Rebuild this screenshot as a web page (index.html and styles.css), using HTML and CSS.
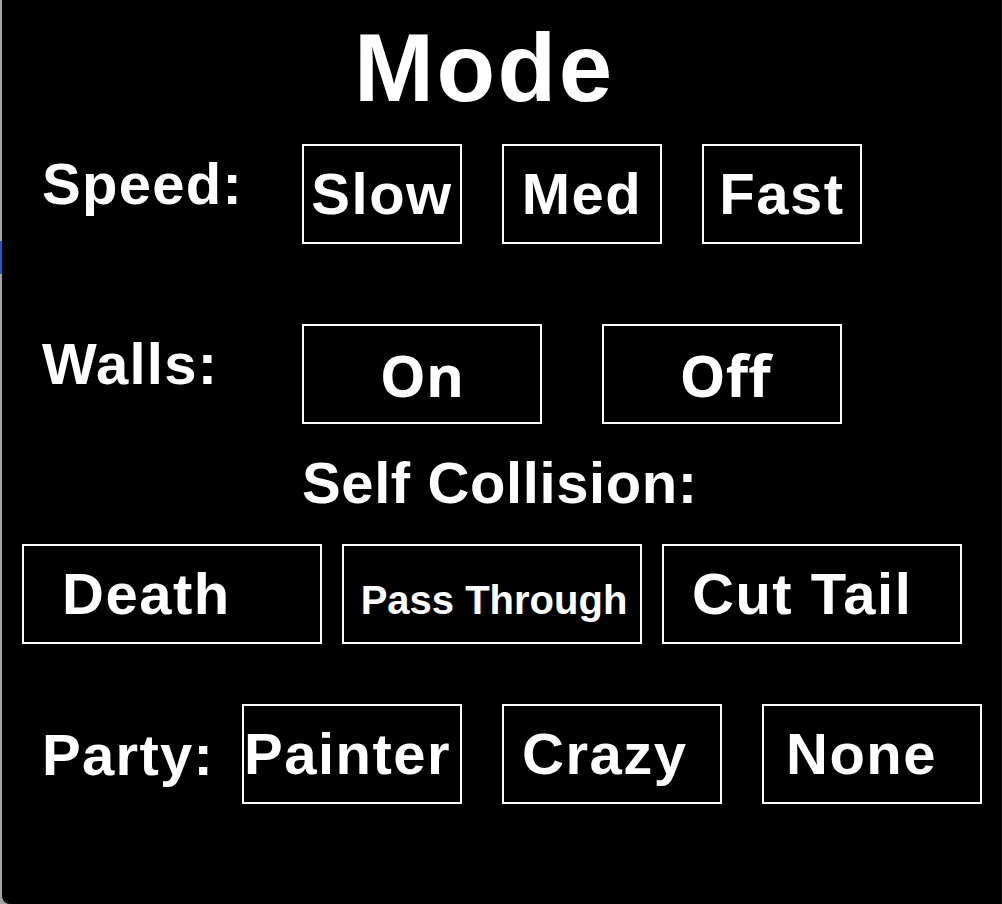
FILE: index.html
```html
<!DOCTYPE html>
<html lang="en">
<head>
<meta charset="utf-8">
<title>Mode</title>
<link rel="stylesheet" href="styles.css">
</head>
<body>
<div class="panel">
  <h1 class="title">Mode</h1>

  <div class="row row-speed">
    <div class="label label-speed">Speed:</div>
    <div class="options gap-40">
      <div class="btn btn-160">Slow</div>
      <div class="btn btn-160">Med</div>
      <div class="btn btn-160">Fast</div>
    </div>
  </div>

  <div class="row row-walls">
    <div class="label label-speed">Walls:</div>
    <div class="options gap-60">
      <div class="btn btn-240 alt-font">On</div>
      <div class="btn btn-240 alt-font">Off</div>
    </div>
  </div>

  <div class="section-label">Self Collision:</div>

  <div class="row row-collision">
    <div class="options gap-20">
      <div class="btn btn-300 start pad-death">Death</div>
      <div class="btn btn-300 small">Pass Through</div>
      <div class="btn btn-300 start pad-cut">Cut Tail</div>
    </div>
  </div>

  <div class="row row-party">
    <div class="label label-party">Party:</div>
    <div class="options gap-40">
      <div class="btn btn-220 start pad-painter">Painter</div>
      <div class="btn btn-220 start pad-crazy">Crazy</div>
      <div class="btn btn-220 start pad-none">None</div>
    </div>
  </div>
</div>
</body>
</html>
```

FILE: styles.css
```css
* {
  box-sizing: border-box;
}

html, body {
  margin: 0;
  padding: 0;
}

body {
  width: 1002px;
  height: 904px;
  overflow: hidden;
  background: linear-gradient(to bottom, #a3a3a3 0 241px, #2456c4 241px 274px, #a3a3a3 274px);
  font-family: "Liberation Sans", Arial, Helvetica, sans-serif;
  font-weight: bold;
  color: #fff;
}

.panel {
  margin-left: 2px;
  width: 1000px;
  height: 904px;
  background: #000;
  border-bottom-left-radius: 8px;
  border-right: 1px solid #151515;
  display: flex;
  flex-direction: column;
}

.title {
  margin: 20px 0 0 0;
  padding-left: 352px;
  font-size: 96px;
  line-height: 96px;
  font-weight: bold;
  letter-spacing: 2.5px;
}

.row {
  display: flex;
  align-items: flex-start;
}

.row-speed {
  margin-top: 28px;
  padding-left: 40px;
}

.row-walls {
  margin-top: 80px;
  padding-left: 40px;
}

.row-collision {
  margin-top: 32px;
  padding-left: 20px;
}

.row-party {
  margin-top: 60px;
  padding-left: 40px;
}

.label {
  font-size: 58px;
  line-height: 58px;
  letter-spacing: 1.3px;
  white-space: nowrap;
}

.label-speed {
  width: 260px;
  margin-top: 11px;
}

.label-party {
  width: 200px;
  margin-top: 22px;
}

.section-label {
  margin-top: 30px;
  padding-left: 300px;
  font-size: 58px;
  line-height: 58px;
  letter-spacing: 0.6px;
}

.options {
  display: flex;
}

.gap-20 { gap: 20px; }
.gap-40 { gap: 40px; }
.gap-60 { gap: 60px; }

.btn {
  height: 100px;
  border: 2px solid #fff;
  display: flex;
  align-items: center;
  justify-content: center;
  font-size: 58px;
  line-height: 96px;
  letter-spacing: 1.5px;
  white-space: nowrap;
}

.btn-160 { width: 160px; }
.btn-220 { width: 220px; }
.btn-240 { width: 240px; }
.btn-300 { width: 300px; }

.alt-font {
  font-family: "Open Sans", "DejaVu Sans", sans-serif;
  font-weight: 700;
  letter-spacing: 0;
  padding-top: 2px;
}

.alt-font + .alt-font {
  padding-left: 6px;
}

.small {
  font-size: 40px;
  line-height: 84px;
  letter-spacing: 0;
  padding-top: 12px;
  padding-left: 4px;
}

.start {
  justify-content: flex-start;
}

.pad-death { padding-left: 38px; }
.pad-cut { padding-left: 28px; }
.pad-painter { padding-left: 0; }
.pad-crazy { padding-left: 18px; }
.pad-none { padding-left: 22px; }
```
